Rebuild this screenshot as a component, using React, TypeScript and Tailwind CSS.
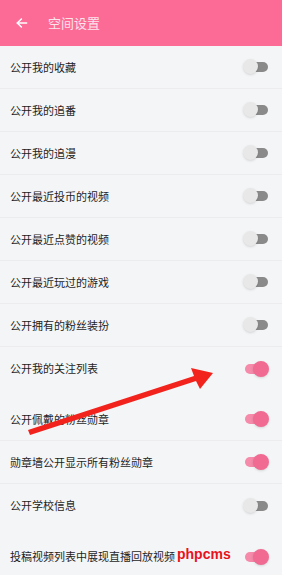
import React from 'react';

type Row = { label: string; on: boolean };

const groups: Row[][] = [
  [
    { label: '公开我的收藏', on: false },
    { label: '公开我的追番', on: false },
    { label: '公开我的追漫', on: false },
    { label: '公开最近投币的视频', on: false },
    { label: '公开最近点赞的视频', on: false },
    { label: '公开最近玩过的游戏', on: false },
    { label: '公开拥有的粉丝装扮', on: false },
    { label: '公开我的关注列表', on: true },
  ],
  [
    { label: '公开佩戴的粉丝勋章', on: true },
    { label: '勋章墙公开显示所有粉丝勋章', on: true },
    { label: '公开学校信息', on: false },
  ],
  [{ label: '投稿视频列表中展现直播回放视频', on: true }],
];

function Toggle({ on }: { on: boolean }) {
  return (
    <div className="relative w-[26px] h-[16px]">
      <div
        className={
          on
            ? 'absolute left-[2px] right-[1px] top-[3px] h-[10px] rounded-full bg-[#f58aaa]'
            : 'absolute left-[2px] right-[1px] top-[3px] h-[10px] rounded-full bg-[#8a8a8a]'
        }
      />
      <div
        className={
          on
            ? 'absolute right-0 top-0 w-[16px] h-[16px] rounded-full bg-[#f06a92] shadow-sm'
            : 'absolute left-0 top-0 w-[15px] h-[15px] rounded-full bg-[#e8e8e8] shadow-sm'
        }
      />
    </div>
  );
}

export default function App() {
  return (
    <div
      className="relative w-[282px] h-[575px] overflow-hidden bg-[#f4f5f7]"
      style={{ fontFamily: '"Noto Sans CJK SC", "Noto Sans", sans-serif' }}
    >
      <div className="h-[46px] bg-[#fb6b96] flex items-center px-[15px]">
        <svg width="14" height="14" viewBox="0 0 24 24" fill="none" stroke="#fff" strokeWidth="2.6" strokeLinecap="round" strokeLinejoin="round">
          <path d="M20 12H4" />
          <path d="M11 5l-7 7 7 7" />
        </svg>
        <span className="ml-[19px] text-[13px] text-[#fde3ec]">空间设置</span>
      </div>

      {groups.map((g, gi) => (
        <div key={gi} className={gi > 0 ? 'mt-[8px]' : ''}>
          {g.map((r) => (
            <div key={r.label} className="h-[43px] flex items-center justify-between pl-[10px] pr-[13px] border-b border-[#ececef] last:border-b-0">
              <span className="text-[11px] text-[#1e1e1e]">{r.label}</span>
              <Toggle on={r.on} />
            </div>
          ))}
        </div>
      ))}

      <svg className="absolute left-0 top-0 pointer-events-none" width="282" height="575">
        <path d="M30 435 L196 381 L200 389 L213 373 L191 368 L194 376 L28 430 Z" fill="#f2231c" />
      </svg>

      <span
        className="absolute left-[177px] top-[547px] text-[14px] leading-none font-bold text-[#e8121c]"
        style={{ fontFamily: '"Liberation Sans", Arial, sans-serif' }}
      >
        phpcms
      </span>
    </div>
  );
}
